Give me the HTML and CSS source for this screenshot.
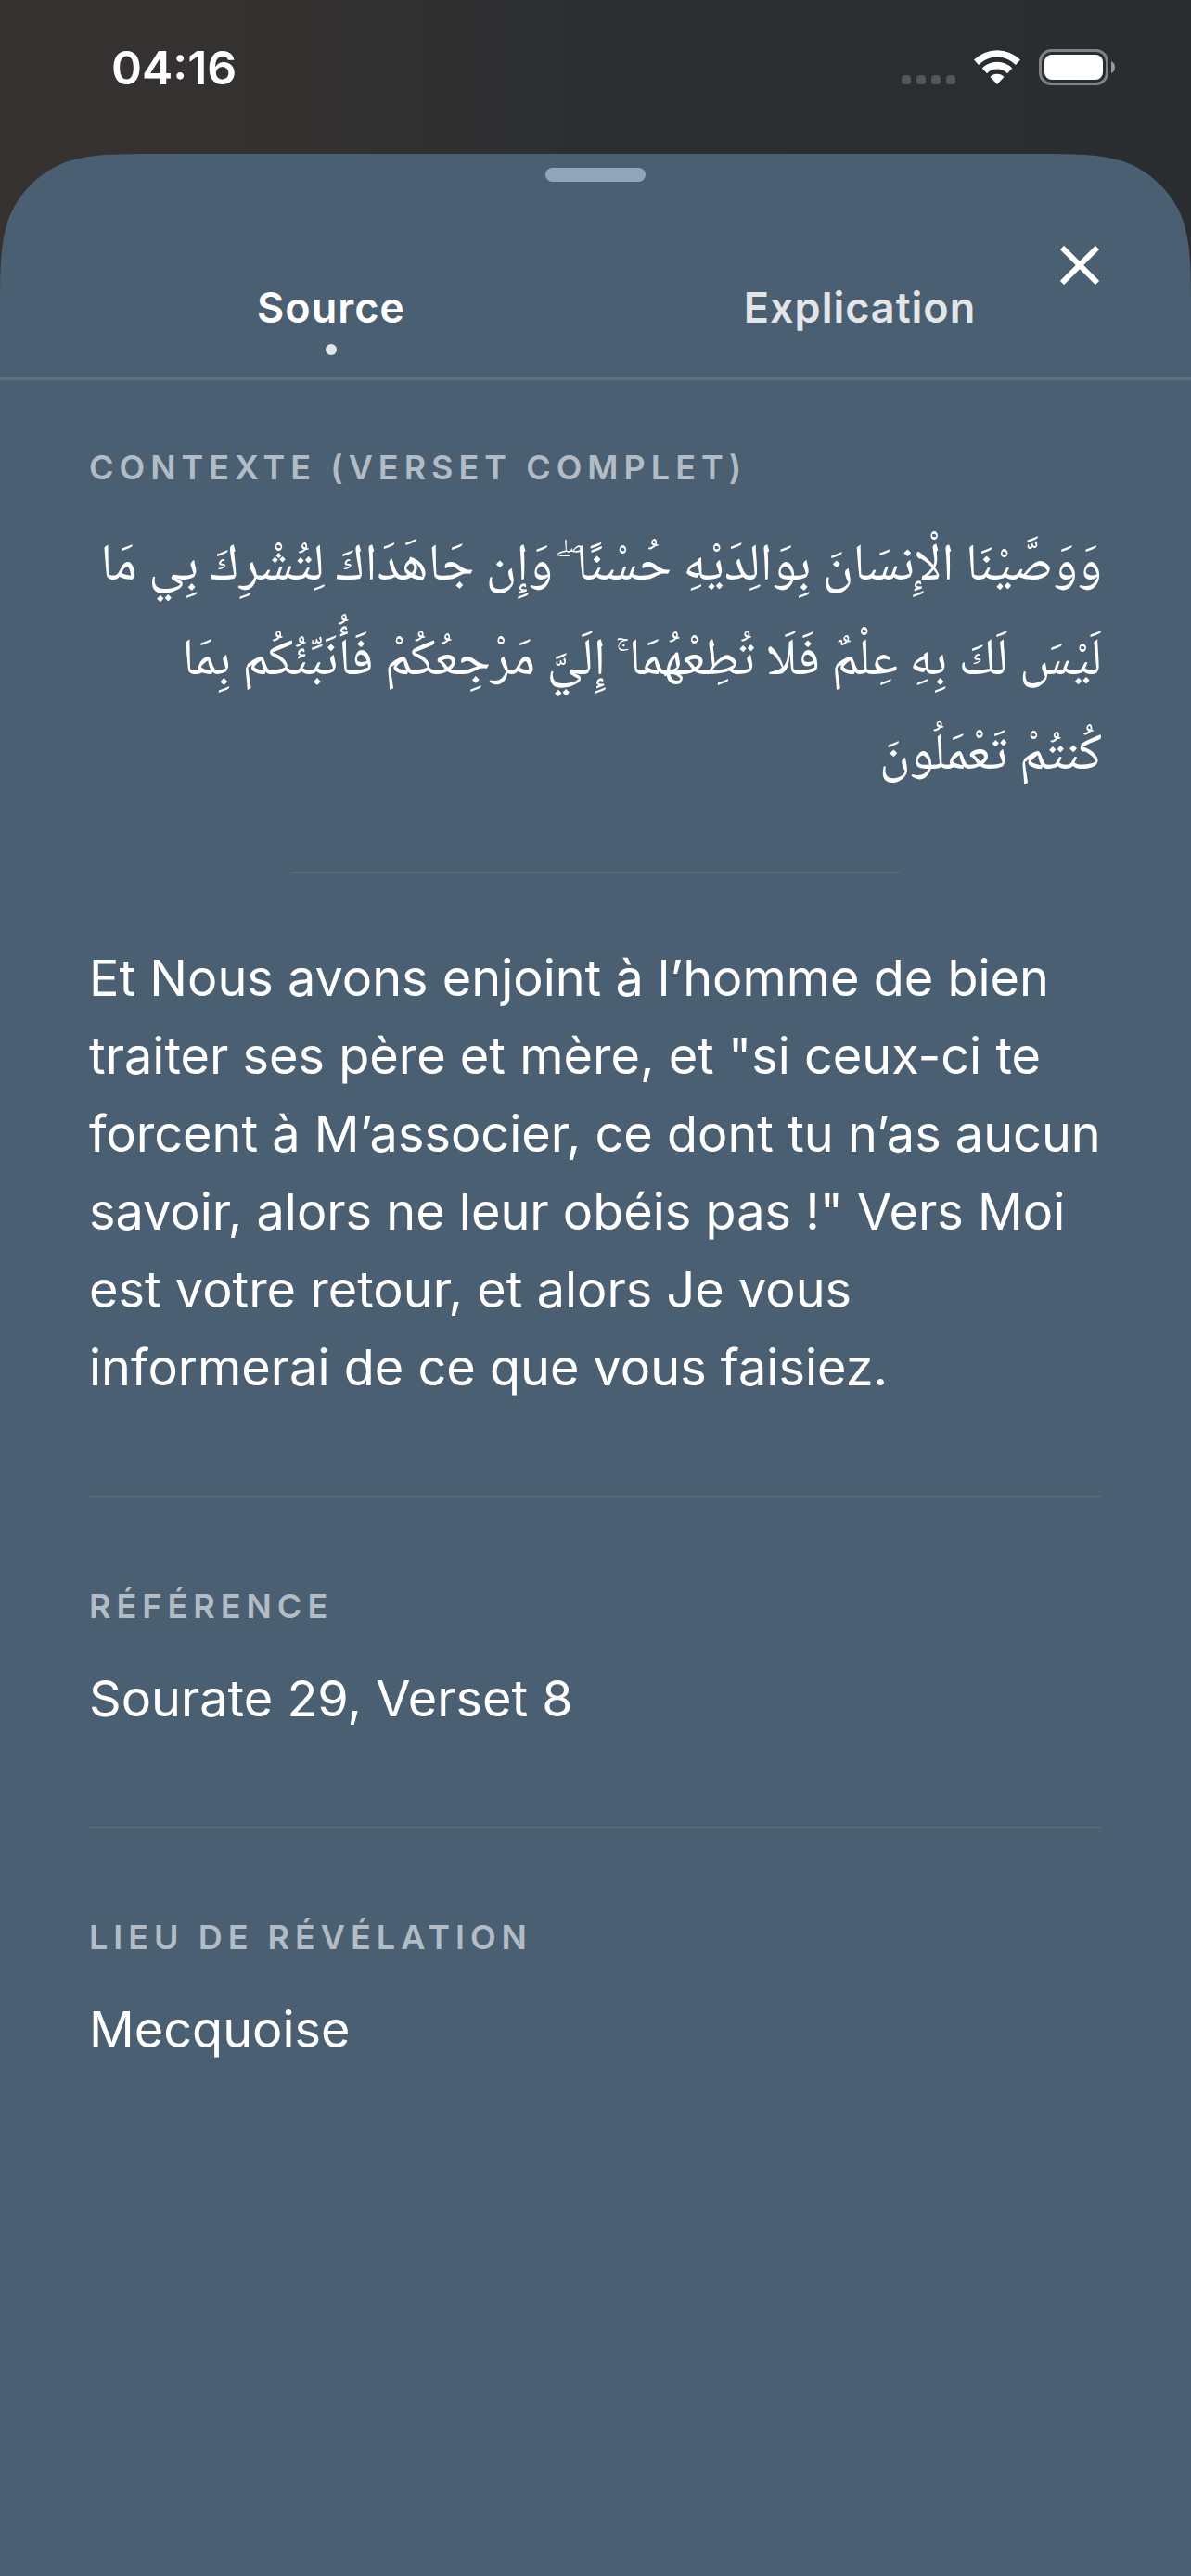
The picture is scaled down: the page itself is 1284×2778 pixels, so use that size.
FILE: index.html
```html
<!DOCTYPE html>
<html lang="fr">
<head>
  <meta charset="utf-8">
  <meta name="viewport" content="width=device-width, initial-scale=1">
  <title>Source du verset</title>
  <link rel="stylesheet" href="styles.css">
</head>
<body>
  <div class="status-bar">
    <span class="time">04:16</span>
    <div class="status-icons">
      <svg class="signal" width="58" height="10" viewBox="0 0 58 10" fill="currentColor">
        <rect x="0" width="10" height="10" rx="4"/>
        <rect x="16" width="10" height="10" rx="4"/>
        <rect x="32" width="10" height="10" rx="4"/>
        <rect x="48" width="10" height="10" rx="4"/>
      </svg>
      <svg class="wifi" width="50" height="37" viewBox="0 0 50 37" fill="currentColor">
        <path d="M0 10.500A35.500 35.500 0 0 1 50 10.500L45 16A28 28 0 0 0 5 16Z"/>
        <path d="M8.800 19.500A23 23 0 0 1 41.200 19.500L36 25.200A15.500 15.500 0 0 0 14 25.200Z"/>
        <path d="M17.500 29A10.500 10.500 0 0 1 32.500 29L25 37Z"/>
      </svg>
      <svg class="battery" width="82" height="39" viewBox="0 0 82 39">
        <rect x="1.500" y="1.500" width="72" height="36" rx="12" fill="none" stroke="#808284" stroke-width="3"/>
        <rect x="6" y="6" width="63" height="27" rx="8" fill="#fff"/>
        <path d="M78 13Q82 15 82 19.500T78 26Z" fill="#97999a"/>
      </svg>
    </div>
  </div>

  <main class="sheet">
    <!-- coins arrondis du panneau -->
    <svg class="corner corner-left" width="175" height="175" viewBox="0 0 175 175">
      <path d="M175 0C124 0 99 0 72 8.500C42.500 19.300 19.300 42.500 8.500 72C0 99 0 124 0 175H175Z"/>
    </svg>
    <svg class="corner corner-right" width="175" height="175" viewBox="0 0 175 175">
      <path d="M0 0C51 0 76 0 103 8.500C132.500 19.300 155.700 42.500 166.500 72C175 99 175 124 175 175H0Z"/>
    </svg>

    <header class="sheet-header">
      <div class="handle"></div>
      <button type="button" class="close" aria-label="Fermer">
        <svg width="42" height="42" viewBox="0 0 42 42" fill="none" stroke="currentColor" stroke-width="6">
          <path d="M2 2L40 40M40 2L2 40"/>
        </svg>
      </button>
      <nav class="tabs">
        <button type="button" class="tab active">Source</button>
        <button type="button" class="tab">Explication</button>
      </nav>
    </header>

    <div class="content">
      <section class="section">
        <h2 class="label">Contexte (verset complet)</h2>
        <p class="arabic" lang="ar" dir="rtl">وَوَصَّيْنَا الْإِنسَانَ بِوَالِدَيْهِ حُسْنًا ۖ وَإِن جَاهَدَاكَ لِتُشْرِكَ بِي مَا<br>لَيْسَ لَكَ بِهِ عِلْمٌ فَلَا تُطِعْهُمَا ۚ إِلَيَّ مَرْجِعُكُمْ فَأُنَبِّئُكُم بِمَا<br>كُنتُمْ تَعْمَلُونَ</p>
        <hr class="short-rule">
        <p class="text">Et Nous avons enjoint à l’homme de bien traiter ses père et mère, et "si ceux-ci te forcent à M’associer, ce dont tu n’as aucun savoir, alors ne leur obéis pas !" Vers Moi est votre retour, et alors Je vous informerai de ce que vous faisiez.</p>
      </section>
      <section class="section">
        <h2 class="label">Référence</h2>
        <p class="text">Sourate 29, Verset 8</p>
      </section>
      <section class="section">
        <h2 class="label">Lieu de révélation</h2>
        <p class="text">Mecquoise</p>
      </section>
    </div>
  </main>
</body>
</html>
```
FILE: styles.css
```css
* {
  box-sizing: border-box;
}

body {
  display: flex;
  flex-direction: column;
  min-height: 100vh;
  margin: 0;
  background: linear-gradient(90deg, #353230 0, #343231 25%, #2c2e31 50%, #2a2d30 100%);
  color: #fff;
  font-family: Inter, "Liberation Sans", sans-serif;
}

.status-bar {
  display: flex;
  justify-content: space-between;
  align-items: center;
  height: 166px;
  padding: 0 82px 21px 120px;
}

.time {
  font-size: 50px;
  font-weight: 600;
}

.status-icons {
  display: flex;
  align-items: flex-end;
  gap: 20px;
}

.signal,
.wifi {
  margin-bottom: 1px;
}

.signal {
  color: #55585b;
}

.sheet {
  position: relative;
  flex: 1;
  background:
    linear-gradient(#4b5f72, #4b5f72) 0 175px / 100% 100% no-repeat,
    linear-gradient(#4b5f72, #4b5f72) 50% 0 / calc(100% - 350px) 175px no-repeat;
}

.corner {
  position: absolute;
  top: 0;
  fill: #4b5f72;
}

.corner-left {
  left: 0;
}

.corner-right {
  right: 0;
}

.sheet-header {
  position: relative;
  padding-top: 15px;
  border-bottom: 3px solid #5f6f80;
}

.handle {
  width: 108px;
  height: 15px;
  margin: 0 auto;
  border-radius: 8px;
  background: #90a4bc;
}

.close {
  position: absolute;
  top: 84px;
  right: 84px;
  display: flex;
  padding: 15px;
  border: none;
  background: none;
  color: #fff;
  cursor: pointer;
}

.tabs {
  display: grid;
  grid-template-columns: 1fr 1fr;
  padding: 104px 72px 24px;
}

.tab {
  display: flex;
  flex-direction: column;
  align-items: center;
  gap: 8px;
  padding: 0;
  border: none;
  background: none;
  color: #e2e6e9;
  font-family: inherit;
  font-size: 45px;
  font-weight: 600;
  line-height: 63px;
  letter-spacing: 1px;
  cursor: pointer;
}

.tab::after {
  content: "";
  width: 12px;
  height: 12px;
  border-radius: 50%;
}

.tab.active {
  color: #fff;
}

.tab.active::after {
  background: #e2e6e9;
}

.content {
  padding: 72px 96px;
}

.section + .section {
  margin-top: 96px;
  padding-top: 96px;
  border-top: 1px solid #5b6e7c;
}

.label {
  margin: 0 0 36px;
  color: #b3bcc5;
  font-size: 36px;
  font-weight: 600;
  line-height: 44px;
  letter-spacing: 6px;
  text-transform: uppercase;
}

.arabic {
  margin: 0;
  font-family: "Noto Naskh Arabic", "DejaVu Sans", sans-serif;
  font-size: 56px;
  line-height: 102px;
  white-space: nowrap;
}

.short-rule {
  width: 60%;
  height: 1px;
  margin: 72px auto;
  border: none;
  background: #5b6e7c;
}

.text {
  margin: 0;
  font-size: 54px;
  line-height: 84px;
}
```
